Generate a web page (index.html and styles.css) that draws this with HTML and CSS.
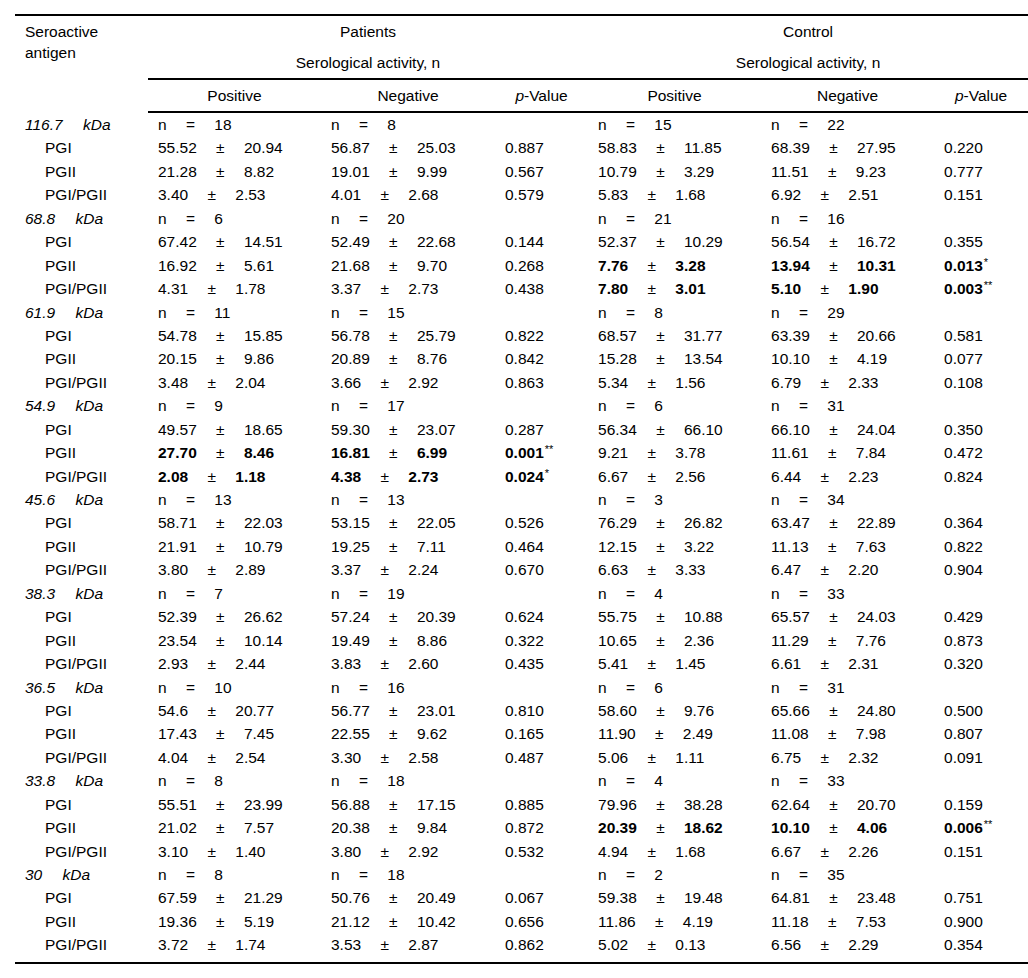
FILE: index.html
```html
<!DOCTYPE html>
<html lang="en">
<head>
<meta charset="utf-8">
<title>Seroactive antigen table</title>
<link rel="stylesheet" href="styles.css">
</head>
<body>
<table class="tbl">
  <colgroup>
    <col class="c-ant"><col class="c-val"><col class="c-val2"><col class="c-p"><col class="c-val"><col class="c-val"><col class="c-p2">
  </colgroup>
  <thead>
    <tr class="h1">
      <th rowspan="3" class="ant-h">Seroactive antigen</th>
      <th colspan="3">Patients</th>
      <th colspan="3">Control</th>
    </tr>
    <tr class="h2">
      <th colspan="3">Serological activity, n</th>
      <th colspan="3">Serological activity, n</th>
    </tr>
    <tr class="h3">
      <th>Positive</th><th>Negative</th><th><i>p</i>-Value</th>
      <th>Positive</th><th>Negative</th><th><i>p</i>-Value</th>
    </tr>
  </thead>
  <tbody>
    <tr><td class="grp"><i>116.7 kDa</i></td><td>n = 18</td><td>n = 8</td><td></td><td>n = 15</td><td>n = 22</td><td></td></tr>
    <tr><td class="sub">PGI</td><td>55.52 ± 20.94</td><td>56.87 ± 25.03</td><td>0.887</td><td>58.83 ± 11.85</td><td>68.39 ± 27.95</td><td>0.220</td></tr>
    <tr><td class="sub">PGII</td><td>21.28 ± 8.82</td><td>19.01 ± 9.99</td><td>0.567</td><td>10.79 ± 3.29</td><td>11.51 ± 9.23</td><td>0.777</td></tr>
    <tr><td class="sub">PGI/PGII</td><td>3.40 ± 2.53</td><td>4.01 ± 2.68</td><td>0.579</td><td>5.83 ± 1.68</td><td>6.92 ± 2.51</td><td>0.151</td></tr>

    <tr><td class="grp"><i>68.8 kDa</i></td><td>n = 6</td><td>n = 20</td><td></td><td>n = 21</td><td>n = 16</td><td></td></tr>
    <tr><td class="sub">PGI</td><td>67.42 ± 14.51</td><td>52.49 ± 22.68</td><td>0.144</td><td>52.37 ± 10.29</td><td>56.54 ± 16.72</td><td>0.355</td></tr>
    <tr><td class="sub">PGII</td><td>16.92 ± 5.61</td><td>21.68 ± 9.70</td><td>0.268</td><td><b>7.76</b> ± <b>3.28</b></td><td><b>13.94</b> ± <b>10.31</b></td><td><b>0.013</b><sup>*</sup></td></tr>
    <tr><td class="sub">PGI/PGII</td><td>4.31 ± 1.78</td><td>3.37 ± 2.73</td><td>0.438</td><td><b>7.80</b> ± <b>3.01</b></td><td><b>5.10</b> ± <b>1.90</b></td><td><b>0.003</b><sup>**</sup></td></tr>

    <tr><td class="grp"><i>61.9 kDa</i></td><td>n = 11</td><td>n = 15</td><td></td><td>n = 8</td><td>n = 29</td><td></td></tr>
    <tr><td class="sub">PGI</td><td>54.78 ± 15.85</td><td>56.78 ± 25.79</td><td>0.822</td><td>68.57 ± 31.77</td><td>63.39 ± 20.66</td><td>0.581</td></tr>
    <tr><td class="sub">PGII</td><td>20.15 ± 9.86</td><td>20.89 ± 8.76</td><td>0.842</td><td>15.28 ± 13.54</td><td>10.10 ± 4.19</td><td>0.077</td></tr>
    <tr><td class="sub">PGI/PGII</td><td>3.48 ± 2.04</td><td>3.66 ± 2.92</td><td>0.863</td><td>5.34 ± 1.56</td><td>6.79 ± 2.33</td><td>0.108</td></tr>

    <tr><td class="grp"><i>54.9 kDa</i></td><td>n = 9</td><td>n = 17</td><td></td><td>n = 6</td><td>n = 31</td><td></td></tr>
    <tr><td class="sub">PGI</td><td>49.57 ± 18.65</td><td>59.30 ± 23.07</td><td>0.287</td><td>56.34 ± 66.10</td><td>66.10 ± 24.04</td><td>0.350</td></tr>
    <tr><td class="sub">PGII</td><td><b>27.70</b> ± <b>8.46</b></td><td><b>16.81</b> ± <b>6.99</b></td><td><b>0.001</b><sup>**</sup></td><td>9.21 ± 3.78</td><td>11.61 ± 7.84</td><td>0.472</td></tr>
    <tr><td class="sub">PGI/PGII</td><td><b>2.08</b> ± <b>1.18</b></td><td><b>4.38</b> ± <b>2.73</b></td><td><b>0.024</b><sup>*</sup></td><td>6.67 ± 2.56</td><td>6.44 ± 2.23</td><td>0.824</td></tr>

    <tr><td class="grp"><i>45.6 kDa</i></td><td>n = 13</td><td>n = 13</td><td></td><td>n = 3</td><td>n = 34</td><td></td></tr>
    <tr><td class="sub">PGI</td><td>58.71 ± 22.03</td><td>53.15 ± 22.05</td><td>0.526</td><td>76.29 ± 26.82</td><td>63.47 ± 22.89</td><td>0.364</td></tr>
    <tr><td class="sub">PGII</td><td>21.91 ± 10.79</td><td>19.25 ± 7.11</td><td>0.464</td><td>12.15 ± 3.22</td><td>11.13 ± 7.63</td><td>0.822</td></tr>
    <tr><td class="sub">PGI/PGII</td><td>3.80 ± 2.89</td><td>3.37 ± 2.24</td><td>0.670</td><td>6.63 ± 3.33</td><td>6.47 ± 2.20</td><td>0.904</td></tr>

    <tr><td class="grp"><i>38.3 kDa</i></td><td>n = 7</td><td>n = 19</td><td></td><td>n = 4</td><td>n = 33</td><td></td></tr>
    <tr><td class="sub">PGI</td><td>52.39 ± 26.62</td><td>57.24 ± 20.39</td><td>0.624</td><td>55.75 ± 10.88</td><td>65.57 ± 24.03</td><td>0.429</td></tr>
    <tr><td class="sub">PGII</td><td>23.54 ± 10.14</td><td>19.49 ± 8.86</td><td>0.322</td><td>10.65 ± 2.36</td><td>11.29 ± 7.76</td><td>0.873</td></tr>
    <tr><td class="sub">PGI/PGII</td><td>2.93 ± 2.44</td><td>3.83 ± 2.60</td><td>0.435</td><td>5.41 ± 1.45</td><td>6.61 ± 2.31</td><td>0.320</td></tr>

    <tr><td class="grp"><i>36.5 kDa</i></td><td>n = 10</td><td>n = 16</td><td></td><td>n = 6</td><td>n = 31</td><td></td></tr>
    <tr><td class="sub">PGI</td><td>54.6 ± 20.77</td><td>56.77 ± 23.01</td><td>0.810</td><td>58.60 ± 9.76</td><td>65.66 ± 24.80</td><td>0.500</td></tr>
    <tr><td class="sub">PGII</td><td>17.43 ± 7.45</td><td>22.55 ± 9.62</td><td>0.165</td><td>11.90 ± 2.49</td><td>11.08 ± 7.98</td><td>0.807</td></tr>
    <tr><td class="sub">PGI/PGII</td><td>4.04 ± 2.54</td><td>3.30 ± 2.58</td><td>0.487</td><td>5.06 ± 1.11</td><td>6.75 ± 2.32</td><td>0.091</td></tr>

    <tr><td class="grp"><i>33.8 kDa</i></td><td>n = 8</td><td>n = 18</td><td></td><td>n = 4</td><td>n = 33</td><td></td></tr>
    <tr><td class="sub">PGI</td><td>55.51 ± 23.99</td><td>56.88 ± 17.15</td><td>0.885</td><td>79.96 ± 38.28</td><td>62.64 ± 20.70</td><td>0.159</td></tr>
    <tr><td class="sub">PGII</td><td>21.02 ± 7.57</td><td>20.38 ± 9.84</td><td>0.872</td><td><b>20.39</b> ± <b>18.62</b></td><td><b>10.10</b> ± <b>4.06</b></td><td><b>0.006</b><sup>**</sup></td></tr>
    <tr><td class="sub">PGI/PGII</td><td>3.10 ± 1.40</td><td>3.80 ± 2.92</td><td>0.532</td><td>4.94 ± 1.68</td><td>6.67 ± 2.26</td><td>0.151</td></tr>

    <tr><td class="grp"><i>30 kDa</i></td><td>n = 8</td><td>n = 18</td><td></td><td>n = 2</td><td>n = 35</td><td></td></tr>
    <tr><td class="sub">PGI</td><td>67.59 ± 21.29</td><td>50.76 ± 20.49</td><td>0.067</td><td>59.38 ± 19.48</td><td>64.81 ± 23.48</td><td>0.751</td></tr>
    <tr><td class="sub">PGII</td><td>19.36 ± 5.19</td><td>21.12 ± 10.42</td><td>0.656</td><td>11.86 ± 4.19</td><td>11.18 ± 7.53</td><td>0.900</td></tr>
    <tr class="last"><td class="sub">PGI/PGII</td><td>3.72 ± 1.74</td><td>3.53 ± 2.87</td><td>0.862</td><td>5.02 ± 0.13</td><td>6.56 ± 2.29</td><td>0.354</td></tr>
  </tbody>
</table>
</body>
</html>
```
FILE: styles.css
```css
html, body {
  margin: 0;
  padding: 0;
  background: #fff;
}

body {
  font-family: "Liberation Sans", Arial, sans-serif;
  font-size: 15.5px;
  color: #000;
}

.tbl {
  border-collapse: collapse;
  table-layout: fixed;
  width: 1013px;
  margin: 14px 0 0 15px;
  border-top: 2px solid #000;
  border-bottom: 2px solid #000;
}

.c-ant { width: 133px; }
.c-val { width: 173px; }
.c-val2 { width: 174px; }
.c-p { width: 93px; }
.c-p2 { width: 94px; }

.tbl th {
  font-weight: normal;
  text-align: center;
  padding: 6px 10px;
  line-height: 19px;
  height: 19px;
  vertical-align: middle;
}

.tbl th.ant-h {
  text-align: left;
  vertical-align: top;
  line-height: 21px;
  padding-top: 5px;
}

.h2 th {
  border-bottom: 2px solid #000;
}

.h3 th {
  border-bottom: 2px solid #000;
}

.tbl td {
  padding: 0 10px;
  line-height: 23.44px;
  white-space: nowrap;
  word-spacing: 15px;
  text-align: left;
  vertical-align: middle;
}

.tbl td.sub {
  padding-left: 30px;
  word-spacing: normal;
}

.tbl td.grp i {
  word-spacing: 16px;
}

.tbl tr.last td {
  padding-bottom: 5px;
}

.tbl b {
  font-weight: bold;
}

.tbl sup {
  font-size: 11px;
  line-height: 0;
  vertical-align: 5px;
  font-weight: normal;
  margin-left: 1px;
}
```
